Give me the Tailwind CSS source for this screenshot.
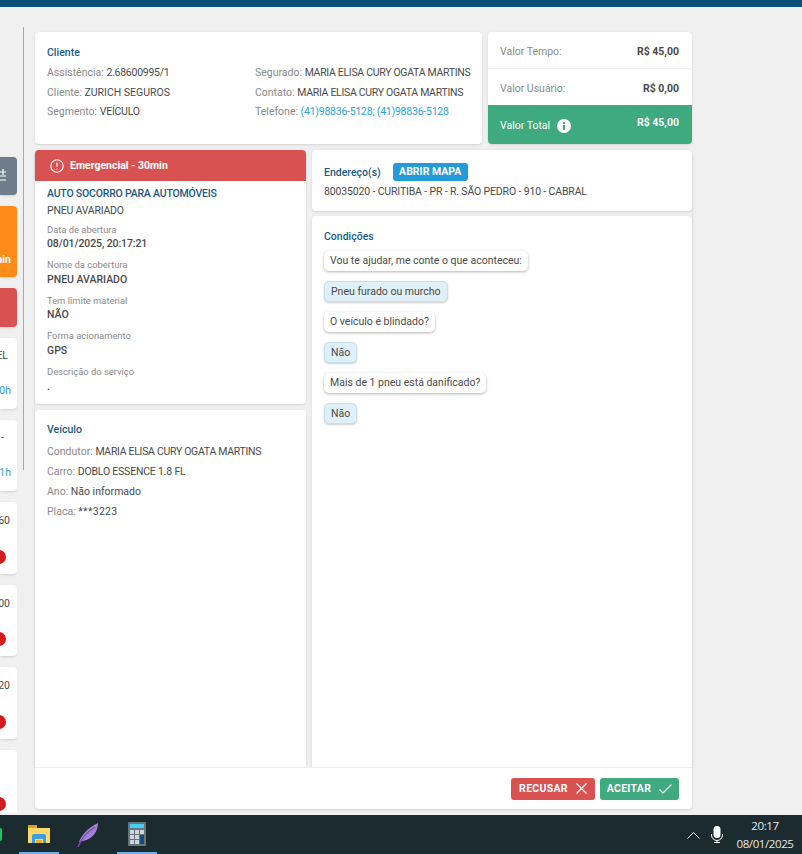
<!DOCTYPE html>
<html lang="pt-BR">
<head>
<meta charset="utf-8"/>
<meta content="width=device-width, initial-scale=1" name="viewport"/>
<title>Assistência</title>
<script src="https://cdn.jsdelivr.net/npm/@tailwindcss/browser@4"></script>
</head>
<body class="w-[802px] h-[854px] overflow-hidden flex flex-col bg-[#f0f0f0] font-['Roboto','Open_Sans',sans-serif] text-[10.5px] text-[#4a4a4a]">
  <div class="h-[7px] bg-[#0b5079]"></div>

  <div class="flex h-[808px] overflow-hidden">
    <!-- fila lateral (cortada) -->
    <aside class="w-[17px] h-[806px] overflow-hidden flex flex-col pt-[150px] gap-[11px] text-right shrink-0">
      <div class="h-[38px] shrink-0 rounded-r bg-[#6f7c8c] text-white flex items-center justify-end pr-[11px] pb-[1px] shadow">
        <svg class="shrink-0" width="12" height="14" viewBox="0 0 12 14" fill="none" stroke="white" stroke-width="1.2"><path d="M0 3h12M0 7h12M0 11h12M9 0v6M5 8v6"/></svg>
      </div>
      <div class="h-[71px] shrink-0 rounded-r bg-[#ff8c1a] text-white font-bold flex items-end justify-end pr-[6px] pb-[9px] shadow">nin</div>
      <div class="h-[39px] shrink-0 rounded-r bg-[#d95252] shadow"></div>
      <div class="h-[71px] shrink-0 rounded-r bg-white shadow flex flex-col justify-between items-end pr-[9px] pt-[10px] pb-[10px]"><span>EL</span><span class="text-[#2a9fd8] -mr-[3px]">0h</span></div>
      <div class="h-[71px] shrink-0 rounded-r bg-white shadow flex flex-col justify-between items-end pr-[13px] pt-[10px] pb-[10px]"><span>-</span><span class="text-[#2a9fd8] -mr-[7px]">1h</span></div>
      <div class="h-[72px] shrink-0 rounded-r bg-white shadow flex flex-col justify-between items-end pr-[7px] pt-[11px]"><span>60</span><span class="w-[14px] h-[14px] mr-[4px] mb-[10px] rounded-full bg-[#d01c1c]"></span></div>
      <div class="h-[71px] shrink-0 rounded-r bg-white shadow flex flex-col justify-between items-end pr-[7px] pt-[11px]"><span>00</span><span class="w-[14px] h-[14px] mr-[4px] mb-[10px] rounded-full bg-[#d01c1c]"></span></div>
      <div class="h-[72px] shrink-0 rounded-r bg-white shadow flex flex-col justify-between items-end pr-[7px] pt-[11px]"><span>20</span><span class="w-[14px] h-[14px] mr-[4px] mb-[10px] rounded-full bg-[#d01c1c]"></span></div>
      <div class="h-[71px] shrink-0 rounded-r bg-white shadow flex flex-col justify-end items-end pr-[7px]"><span class="w-[14px] h-[14px] mr-[4px] mb-[10px] rounded-full bg-[#d01c1c]"></span></div>
    </aside>

    <div class="w-px h-[443px] mt-[20px] ml-[6px] mr-[11px] bg-[#a8a8a8] shrink-0"></div>

    <main class="w-[657px] mt-[25px] flex flex-col gap-[6px]">
      <!-- topo -->
      <div class="flex gap-[6px] h-[112px]">
        <section class="w-[447px] bg-white rounded shadow px-[12px] pt-[13px]">
          <h2 class="text-[#1a5a85] font-medium leading-[15px]">Cliente</h2>
          <div class="flex mt-[3px] leading-[19.500px]">
            <div class="w-[208px] shrink-0">
              <p><span class="text-[#8a8a8a]">Assistência:</span> <span class="tracking-[-0.25px]">2.68600995/1</span></p>
              <p><span class="text-[#8a8a8a]">Cliente:</span> ZURICH SEGUROS</p>
              <p><span class="text-[#8a8a8a]">Segmento:</span> <span class="tracking-[-0.25px]">VEÍCULO</span></p>
            </div>
            <div class="whitespace-nowrap">
              <p><span class="text-[#8a8a8a]">Segurado:</span> <span class="tracking-[-0.3px]">MARIA ELISA CURY OGATA MARTINS</span></p>
              <p><span class="text-[#8a8a8a]">Contato:</span> <span class="tracking-[-0.3px]">MARIA ELISA CURY OGATA MARTINS</span></p>
              <p><span class="text-[#8a8a8a]">Telefone:</span> <span class="text-[#2a9fd8] tracking-[-0.23px]">(41)98836-5128; (41)98836-5128</span></p>
            </div>
          </div>
        </section>
        <section class="w-[204px] rounded shadow overflow-hidden flex flex-col bg-white">
          <div class="h-[37px] pl-[12px] pr-[13px] pt-[4px] flex justify-between items-center border-b border-[#eeeeee]"><span class="text-[#8a8a8a]">Valor Tempo:</span><b class="font-bold">R$ 45,00</b></div>
          <div class="h-[36px] pl-[12px] pr-[13px] pt-[3px] flex justify-between items-center"><span class="text-[#8a8a8a]">Valor Usuário:</span><b class="font-bold">R$ 0,00</b></div>
          <div class="flex-1 pl-[12px] pr-[13px] flex justify-between items-center bg-[#3fa97f] text-white">
            <span class="flex items-center gap-[7px] pt-[2px]">Valor Total
              <svg width="14" height="14" viewBox="0 0 14 14"><circle cx="7" cy="7" r="7" fill="white"/><rect x="6" y="6" width="2" height="5" fill="#3fa97f"/><rect x="6" y="3" width="2" height="2" fill="#3fa97f"/></svg>
            </span>
            <b class="font-bold -mt-[3px]">R$ 45,00</b>
          </div>
        </section>
      </div>

      <!-- corpo -->
      <div class="h-[659px] rounded shadow flex flex-col">
        <div class="flex-1 flex gap-[6px] min-h-0">
          <div class="w-[271px] flex flex-col gap-[6px]">
            <section class="h-[254px] bg-white rounded shadow overflow-hidden">
              <div class="h-[31px] bg-[#d95252] text-white font-bold flex items-center gap-[6px] px-[15px]">
                <svg width="14" height="14" viewBox="0 0 14 14" fill="none" stroke="white" stroke-width="1.1"><circle cx="7" cy="7" r="6.2"/><path d="M7 3.400v4.400M7 9.400v1.200"/></svg>
                Emergencial - 30min
              </div>
              <div class="px-[12px] pt-[5px]">
                <h3 class="text-[#1a5a85] font-medium leading-[16px] tracking-[-0.2px]">AUTO SOCORRO PARA AUTOMÓVEIS</h3>
                <p class="leading-[17px] tracking-[-0.2px]">PNEU AVARIADO</p>
                <p class="text-[9.400px] text-[#8a8a8a] leading-[14px] mt-[4px]">Data de abertura</p>
                <p class="font-medium leading-[14px] tracking-[-0.1px]">08/01/2025, 20:17:21</p>
                <p class="text-[9.400px] text-[#8a8a8a] leading-[14px] mt-[7px]">Nome da cobertura</p>
                <p class="font-medium leading-[14px] mt-[0.500px]">PNEU AVARIADO</p>
                <p class="text-[9.400px] text-[#8a8a8a] leading-[14px] mt-[7px]">Tem limite material</p>
                <p class="font-medium leading-[14px] mt-[0.500px]">NÃO</p>
                <p class="text-[9.400px] text-[#8a8a8a] leading-[14px] mt-[7px]">Forma acionamento</p>
                <p class="font-medium leading-[14px] mt-[0.500px]">GPS</p>
                <p class="text-[9.400px] text-[#8a8a8a] leading-[14px] mt-[7px]">Descrição do serviço</p>
                <p class="font-medium leading-[14px] mt-[1px]">.</p>
              </div>
            </section>
            <section class="flex-1 bg-white rounded-t px-[12px] pt-[12px] shadow">
              <h2 class="text-[#1a5a85] font-medium leading-[15px]">Veículo</h2>
              <div class="mt-[5px] leading-[20px]">
                <p><span class="text-[#8a8a8a]">Condutor:</span> <span class="tracking-[-0.3px]">MARIA ELISA CURY OGATA MARTINS</span></p>
                <p><span class="text-[#8a8a8a]">Carro:</span> <span class="tracking-[-0.2px]">DOBLO ESSENCE 1.8 FL</span></p>
                <p><span class="text-[#8a8a8a]">Ano:</span> Não informado</p>
                <p class="-mt-[0.500px]"><span class="text-[#8a8a8a]">Placa:</span> <span class="tracking-[0.3px]">***3223</span></p>
              </div>
            </section>
          </div>
          <div class="w-[380px] flex flex-col gap-[5px]">
            <section class="h-[61px] bg-white rounded shadow px-[12px] pt-[13px]">
              <div class="flex items-center gap-[12px]">
                <h2 class="text-[#1a5a85] font-medium pt-[1px]">Endereço(s)</h2>
                <span class="h-[18px] w-[75px] justify-center rounded-[3px] bg-[#229bd8] text-white font-bold flex items-center">ABRIR MAPA</span>
              </div>
              <p class="leading-[16px] mt-[3px] tracking-[-0.15px]">80035020 - CURITIBA - PR - R. SÃO PEDRO - 910 - CABRAL</p>
            </section>
            <section class="flex-1 bg-white rounded-t shadow px-[12px] pt-[13px]">
              <h2 class="text-[#1a5a85] font-medium leading-[15px]">Condições</h2>
              <div class="flex flex-col items-start gap-[10px] mt-[7px] leading-[14px]">
                <span class="px-[6px] py-[3px] rounded-[5px] bg-white shadow-[0_1px_3px_rgba(0,0,0,0.3)]">Vou te ajudar, me conte o que aconteceu:</span>
                <span class="px-[6px] py-[2.500px] rounded-[5px] bg-[#dff0f9] border border-[#c3e0f0] shadow-[0_1px_2px_rgba(0,0,0,0.2)]">Pneu furado ou murcho</span>
                <span class="px-[6px] py-[3px] rounded-[5px] bg-white shadow-[0_1px_3px_rgba(0,0,0,0.3)]">O veículo é blindado?</span>
                <span class="px-[6px] py-[2.500px] rounded-[5px] bg-[#dff0f9] border border-[#c3e0f0] shadow-[0_1px_2px_rgba(0,0,0,0.2)]">Não</span>
                <span class="px-[6px] py-[3px] rounded-[5px] bg-white shadow-[0_1px_3px_rgba(0,0,0,0.3)]">Mais de 1 pneu está danificado?</span>
                <span class="px-[6px] py-[2.500px] rounded-[5px] bg-[#dff0f9] border border-[#c3e0f0] shadow-[0_1px_2px_rgba(0,0,0,0.2)]">Não</span>
              </div>
            </section>
          </div>
        </div>
        <footer class="h-[42px] bg-white border-t border-[#eeeeee] rounded-b flex items-center justify-end gap-[5px] pr-[13px]">
          <button class="h-[22px] w-[84px] rounded-[3px] bg-[#d95252] text-white font-bold tracking-[0.3px] flex items-center justify-center gap-[8px]"><span class="pt-[1px]">RECUSAR</span>
            <svg width="11" height="11" viewBox="0 0 11 11" fill="none" stroke="white" stroke-width="1.2"><path d="M.5.5l10 10M10.500.5l-10 10"/></svg>
          </button>
          <button class="h-[22px] w-[79px] rounded-[3px] bg-[#3fa97f] text-white font-bold tracking-[0.3px] flex items-center justify-center gap-[8px]"><span class="pt-[1px]">ACEITAR</span>
            <svg width="13" height="10" viewBox="0 0 13 10" fill="none" stroke="white" stroke-width="1.2"><path d="M.5 5.500l3.500 3.500 8.500-8.500"/></svg>
          </button>
        </footer>
      </div>
    </main>
  </div>

  <!-- barra de tarefas -->
  <div class="h-[39px] bg-[#1b2b30] flex items-center text-white shrink-0">
    <span class="w-[2px] h-[13px] rounded-r-full bg-[#25c45a] mr-[26px]"></span>
    <div class="w-[40px] h-[39px] -ml-[9px] flex items-center justify-center border-b-[2px] border-[#6cb2e8]">
      <svg width="22" height="18" viewBox="0 0 22 18"><path d="M0 1h8l1 2h13v15H0z" fill="#ffd766"/><path d="M0 0h9v3H0z" fill="#e0a010"/><path d="M4 18v-7q0-2 2-2h10q2 0 2 2v7h-3v-4H7v4z" fill="#3d9be0"/><path d="M8 15h6v3H8z" fill="#f0b020"/></svg>
    </div>
    <div class="w-[58px] flex justify-center">
      <svg width="22" height="24" viewBox="0 0 22 24"><path d="M2 19C4 13 10 5 21 0 21 8 16 16 6 18z" fill="#a57ed6"/><path d="M1 24C4 16 10 9 18 4" stroke="#7a4db5" stroke-width="1.400" fill="none"/></svg>
    </div>
    <div class="w-[40px] h-[39px] flex items-center justify-center border-b-[2px] border-[#6cb2e8]">
      <svg width="18" height="24" viewBox="0 0 18 24"><rect width="18" height="24" rx="1" fill="#66757f"/><rect x="2" y="2" width="14" height="4" fill="#45d0f5"/><g fill="#cfd6da"><rect x="2" y="8" width="4" height="4"/><rect x="7" y="8" width="4" height="4"/><rect x="12" y="8" width="4" height="4"/><rect x="2" y="13" width="4" height="4"/><rect x="7" y="13" width="4" height="4"/><rect x="2" y="18" width="4" height="4"/><rect x="7" y="18" width="4" height="4"/></g><rect x="12" y="13" width="4" height="9" fill="#124a86"/></svg>
    </div>
    <div class="ml-auto flex items-center">
      <svg width="13" height="8" viewBox="0 0 13 8" fill="none" stroke="white" stroke-width="1"><path d="M.5 7.500l6-6 6 6"/></svg>
      <svg class="ml-[11px]" width="12" height="17" viewBox="0 0 12 17"><rect x="2.500" y="0" width="7" height="12" rx="3.500" fill="white"/><path d="M.5 8v1a5.500 5.500 0 0 0 11 0V8M6 14.500V16M3 16.500h6" fill="none" stroke="white"/></svg>
      <div class="w-[58px] ml-[13px] mr-[8px] text-center leading-[18px] text-[11.500px] font-['Open_Sans',sans-serif] text-[#e8e8e8] tracking-[-0.4px] whitespace-nowrap">
        <p>20:17</p>
        <p>08/01/2025</p>
      </div>
    </div>
  </div>
</body>
</html>
